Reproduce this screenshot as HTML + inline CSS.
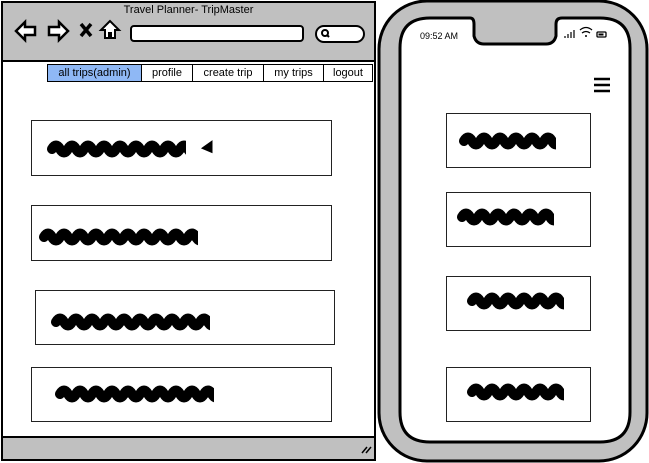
<!DOCTYPE html><html><head><style>
body{margin:0;width:649px;height:463px;background:#fff;overflow:hidden;font-family:"Liberation Sans",sans-serif;position:relative}
.a{position:absolute}
.tab{position:absolute;top:64px;height:18px;border:1.5px solid #000;box-sizing:border-box;font-size:11px;line-height:16px;text-align:center;background:#fff}
.box{position:absolute;border:1.5px solid #222;box-sizing:border-box;background:#fff}
</style></head><body>
<svg class="a" style="left:0;top:0" width="649" height="463">
<defs><path id="sq" d="M0 6 q4 -7 8 0 q4 7 8 0 q4 -7 8 0 q4 7 8 0 q4 -7 8 0 q4 7 8 0 q4 -7 8 0 q4 7 8 0 q4 -7 8 0 q4 7 8 0 q4 -7 8 0 q4 7 8 0 q4 -7 8 0 q4 7 8 0 q4 -7 8 0 q4 7 8 0 q4 -7 8 0 q4 7 8 0 q4 -7 8 0 q4 7 8 0" fill="none" stroke="#000" stroke-width="10" stroke-linecap="round"/>
<clipPath id="c1"><rect x="-6" y="-10" width="140" height="30"/></clipPath>
<clipPath id="c2"><rect x="-6" y="-10" width="160" height="30"/></clipPath>
<clipPath id="c3"><rect x="-6" y="-10" width="98" height="30"/></clipPath>
</defs>
<rect x="2" y="2" width="373" height="458" fill="#fff" stroke="#000" stroke-width="2"/>
<rect x="3" y="3" width="371" height="58" fill="#c0c0c0"/>
<line x1="2" y1="61" x2="375" y2="61" stroke="#000" stroke-width="2"/>
<rect x="3" y="437" width="371" height="22" fill="#c0c0c0"/>
<line x1="2" y1="437" x2="375" y2="437" stroke="#000" stroke-width="2"/>
<path d="M362 453 l5 -6 M366 453 l5 -6" stroke="#000" stroke-width="1.5"/>
<path d="M16 31 l9 -9 v5 h10 v8 h-10 v5 z" fill="#fff" stroke="#000" stroke-width="2.5"/>
<path d="M68 31 l-9 -9 v5 h-10 v8 h10 v5 z" fill="#fff" stroke="#000" stroke-width="2.5"/>
<path d="M81 24 l10 12 M91 24 l-10 12" stroke="#000" stroke-width="3.5"/>
<path d="M110 21 l-9 9 h4 v8 h4 v-5 h2 v5 h4 v-8 h4 z" fill="#fff" stroke="#000" stroke-width="2"/>
<rect x="131" y="26" width="172" height="15" rx="3" fill="#fff" stroke="#000" stroke-width="2"/>
<rect x="316" y="26" width="48" height="16" rx="8" fill="#fff" stroke="#000" stroke-width="2"/>
<circle cx="325" cy="33" r="3" fill="none" stroke="#000" stroke-width="2"/><path d="M327 35 l2 2" stroke="#000" stroke-width="2"/>
<rect x="379" y="1" width="268" height="460" rx="48" fill="#c0c0c0" stroke="#000" stroke-width="3"/>
<path d="M430 18 H470 Q474 18 474 24 V36 Q476 44 484 44 H546 Q554 44 556 36 V24 Q556 18 562 18 H600 Q630 18 630 48 V412 Q630 442 600 442 H430 Q400 442 400 412 V48 Q400 18 430 18 Z" fill="#fff" stroke="#000" stroke-width="3"/>
<path d="M565 38 v-2 M568 38 v-4 M571 38 v-6 M574 38 v-8" stroke="#000" stroke-width="1.2"/>
<path d="M580 30 q6 -5 12 0 M582 33 q4 -3 8 0" stroke="#000" stroke-width="1.3" fill="none"/><circle cx="586" cy="36" r="1" fill="#000"/>
<rect x="597" y="32" width="9" height="5" rx="1" fill="none" stroke="#000" stroke-width="1.3"/><rect x="598.5" y="33.5" width="5" height="2" fill="#000"/>
<path d="M594 79 h16 M594 85 h16 M594 91 h16" stroke="#000" stroke-width="2.5"/>
</svg>
<div class="a" style="left:0;top:4px;width:377px;text-align:center;font-size:11px">Travel Planner- TripMaster</div>
<div class="a" style="left:420px;top:31px;font-size:9px">09:52 AM</div>
<div class="tab" style="left:47px;width:95px;background:#8fb8f5">all trips(admin)</div>
<div class="tab" style="left:141px;width:52px">profile</div>
<div class="tab" style="left:192px;width:72px">create trip</div>
<div class="tab" style="left:263px;width:61px">my trips</div>
<div class="tab" style="left:323px;width:50px">logout</div>
<div class="box" style="left:31px;top:120px;width:301px;height:56px"></div>
<div class="box" style="left:31px;top:205px;width:301px;height:56px"></div>
<div class="box" style="left:35px;top:290px;width:300px;height:55px"></div>
<div class="box" style="left:31px;top:367px;width:301px;height:55px"></div>
<div class="box" style="left:446px;top:113px;width:145px;height:55px"></div>
<div class="box" style="left:446px;top:192px;width:145px;height:55px"></div>
<div class="box" style="left:446px;top:276px;width:145px;height:55px"></div>
<div class="box" style="left:446px;top:367px;width:145px;height:55px"></div>
<svg class="a" style="left:0;top:0" width="649" height="463">
<g transform="translate(52,143)"><use href="#sq" clip-path="url(#c1)"/></g>
<path d="M204 148 l7 -5 v8 z" fill="#000" stroke="#000" stroke-width="3"/>
<g transform="translate(44,231)"><use href="#sq" clip-path="url(#c2)"/></g>
<g transform="translate(56,316)"><use href="#sq" clip-path="url(#c2)"/></g>
<g transform="translate(60,388)"><use href="#sq" clip-path="url(#c2)"/></g>
<g transform="translate(464,135)"><use href="#sq" clip-path="url(#c3)"/></g>
<g transform="translate(462,211)"><use href="#sq" clip-path="url(#c3)"/></g>
<g transform="translate(472,295)"><use href="#sq" clip-path="url(#c3)"/></g>
<g transform="translate(472,386)"><use href="#sq" clip-path="url(#c3)"/></g>
</svg>
</body></html>
